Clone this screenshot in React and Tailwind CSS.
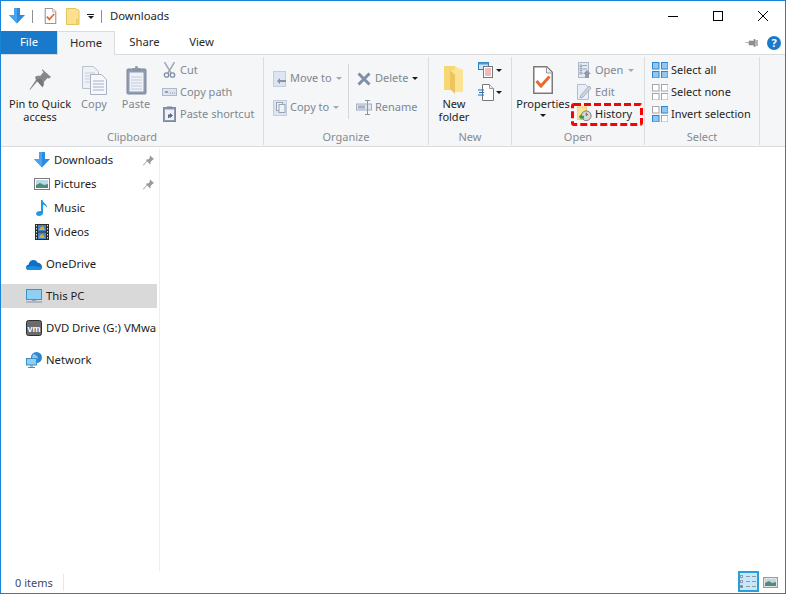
import { Fragment } from 'react'

const DownArrow = ({ size = 16 }) => (
  <svg width={size} height={size} viewBox="0 0 16 16" className="block">
    <path d="M5 0h6v7h5l-8 8.500L0 7h5z" fill="#2a8be0" />
    <path d="M5 0h3v15.500L0 7h5z" fill="#4ba3ec" />
  </svg>
)

const DocCheck = ({ w = 13, h = 16 }) => (
  <svg width={w} height={h} viewBox="0 0 20 28" className="block">
    <path d="M.75.750h13l5.500 5.500v21H.750z" fill="#fff" stroke="#7a7a7a" strokeWidth="1.500" />
    <path d="M13.500 1v6h5.500" fill="#eee" stroke="#9a9a9a" />
    <path d="M3.500 15l4.500 5 8.500-9.500" fill="none" stroke="#ea6a2e" strokeWidth="3" />
  </svg>
)

const MiniFolder = () => (
  <svg width="14" height="17" viewBox="0 0 14 17" className="block">
    <path d="M.5.500h9l3.500 2v14H.5z" fill="#fbe08e" stroke="#e4c45c" />
    <path d="M10 11h3v5h-3z" fill="#f0cf6c" />
  </svg>
)

const BigPin = () => (
  <svg width="22" height="22" viewBox="0 0 22 22" className="block">
    <path d="M13 0l9 8-2 1.500-1.500-.5-4 4.500c.7 2 .2 3.500-1 5L8 12l-1-1-1-3c1.500-1.200 3-1.700 5.200-1L14.500 3 13 1.500z" fill="#86898c" />
    <path d="M9 11.500L1 21l-.5-.5L7.500 10z" fill="#86898c" />
    <path d="M7 11l6.500 6.500c1-1.300 1.500-2.800.8-4.500L11 9.500z" fill="#75787b" />
  </svg>
)

const SmallPin = () => (
  <svg width="11" height="11" viewBox="0 0 22 22" className="block">
    <path d="M13 0l9 8-3 2-4 4c.7 2 .2 3.500-1 5L6 10c1.500-1.200 3-1.700 5.200-1L14 4z" fill="#9a9a9a" />
    <path d="M9 12L1 21l-1-1 8-9z" fill="#9a9a9a" />
  </svg>
)

const CopyBig = () => (
  <svg width="25" height="29" viewBox="0 0 25 29" className="block">
    <path d="M.5.500h11l5 5v17H.5z" fill="#eef1f6" stroke="#b9c1d0" />
    <path d="M3 7h10M3 10h10M3 13h10M3 16h10" stroke="#c9cfda" />
    <path d="M8.500 8.500h11l5 5v15h-16z" fill="#f6f8fb" stroke="#a9b3c4" />
    <path d="M11 15h11M11 18h11M11 21h11M11 24h11" stroke="#a5b0c5" />
  </svg>
)

const PasteBig = () => (
  <svg width="21" height="29" viewBox="0 0 21 29" className="block">
    <rect x="1" y="3" width="19" height="25" rx="1" fill="#8f9bb0" stroke="#7d899d" />
    <rect x="3.500" y="6.500" width="14" height="19" fill="#eef1f8" />
    <path d="M5 11h11M5 14h11M5 17h11M5 20h11M5 23h11" stroke="#c3cbdc" />
    <path d="M7 4.500V2.500h2.500V.500h2v2H14v2z" fill="#8f98a6" stroke="#7d8694" strokeWidth=".5" />
  </svg>
)

const Scissors = () => (
  <svg width="13" height="16" viewBox="0 0 13 16" className="block">
    <path d="M1.500 0l6.500 11M11.500 0L5 11" stroke="#a3a9b3" strokeWidth="1.500" fill="none" />
    <circle cx="3.500" cy="13" r="2.200" fill="none" stroke="#7d8fa8" strokeWidth="1.300" />
    <circle cx="9.500" cy="13" r="2.200" fill="none" stroke="#7d8fa8" strokeWidth="1.300" />
  </svg>
)

const CopyPathIcon = () => (
  <svg width="15" height="8" viewBox="0 0 15 8" className="block">
    <rect x=".5" y=".5" width="14" height="7" fill="#dfe6f2" stroke="#aeb9cc" />
    <path d="M3 3l1 2 1-2 1 2M8 5h1M10 5h1M12 5h1" stroke="#6f7b90" strokeWidth=".8" fill="none" />
  </svg>
)

const PasteShortcut = () => (
  <svg width="13" height="16" viewBox="0 0 13 16" className="block">
    <rect x=".5" y="1.500" width="12" height="14" fill="#8f9bb0" stroke="#7d899d" />
    <rect x="2" y="3.500" width="9" height="10.500" fill="#eef1f8" />
    <path d="M4 .5h5v2H4z" fill="#7d8694" />
    <path d="M5 12V8.500h2V7l3 2.500-3 2.500v-1.500H6.500V12z" fill="#5b6980" />
  </svg>
)

const MoveToIcon = () => (
  <svg width="13" height="16" viewBox="0 0 13 16" className="block">
    <rect x=".5" y=".5" width="12" height="15" fill="#dde5f3" stroke="#c2cde0" />
    <path d="M4 10l3-3v2h6v2H7v2z" fill="#8a94a6" />
  </svg>
)

const CopyToIcon = () => (
  <svg width="14" height="16" viewBox="0 0 14 16" className="block">
    <rect x=".5" y=".5" width="13" height="15" fill="#dde5f3" stroke="#c2cde0" />
    <rect x="3.500" y="2.500" width="6" height="8" fill="#eef2f8" stroke="#98a3b6" />
    <rect x="6" y="4.500" width="6" height="8" fill="#eef2f8" stroke="#98a3b6" />
  </svg>
)

const DeleteX = () => (
  <svg width="14" height="14" viewBox="0 0 14 14" className="block">
    <path d="M1.500 1.500l11 11M12.500 1.500l-11 11" stroke="#7f8fa8" strokeWidth="3" />
  </svg>
)

const RenameIcon = () => (
  <svg width="16" height="15" viewBox="0 0 16 15" className="block">
    <rect x=".5" y="4" width="15" height="6" fill="#dfe6f2" stroke="#a6b0c0" />
    <rect x="2" y="5.500" width="7" height="3" fill="#a6b0c0" />
    <path d="M9 .5h5M11.500 .5v14M9 14.500h5" stroke="#8a94a6" fill="none" />
  </svg>
)

const FolderBig = () => (
  <svg width="20" height="28" viewBox="0 0 20 28" className="block">
    <path d="M0 0h11v24H0z" fill="#f7d774" />
    <path d="M11 0l8 4v22l-8-2z" fill="#fbe7a2" />
    <path d="M6 4l13 0v22H11V9z" fill="#fbe394" />
    <path d="M6 4l5 5v19L6 23z" fill="#eec55a" />
  </svg>
)

const NewItemIcon = () => (
  <svg width="16" height="16" viewBox="0 0 16 16" className="block">
    <rect x=".5" y=".5" width="10" height="7" fill="#cfe6f8" stroke="#2d7fb8" />
    <path d="M.5.500h10v2H.5z" fill="#4a9ad4" />
    <rect x="5.500" y="4.500" width="9" height="11" fill="#fff" stroke="#777" />
    <path d="M7 7h6M7 9h6M7 11h6M7 13h6" stroke="#d9534f" strokeWidth=".8" />
  </svg>
)

const EasyAccessIcon = () => (
  <svg width="16" height="17" viewBox="0 0 16 17" className="block">
    <path d="M4.500.500h7l4 4v12h-11z" fill="#fff" stroke="#777" />
    <path d="M11.500.5v4h4" fill="#eee" stroke="#999" />
    <path d="M0 6h6M1 8.500h5M0 11h6" stroke="#1f6fb5" strokeWidth="1.200" />
  </svg>
)

const OpenIcon = () => (
  <svg width="13" height="16" viewBox="0 0 13 16" className="block">
    <rect x=".5" y=".5" width="10" height="15" fill="#e3e9f3" stroke="#aeb8c8" />
    <path d="M2 3h2v2H2zM2 6.500h2v2H2zM2 10h2v2H2zM5 3.500h4M5 7h4" stroke="#8c97aa" strokeWidth=".8" fill="none" />
    <path d="M9 8l4 4h-2v4H7v-4H5z" fill="#8f99ab" />
  </svg>
)

const EditIcon = () => (
  <svg width="15" height="16" viewBox="0 0 15 16" className="block">
    <path d="M.5.500h8l3 3v12H.5z" fill="#e9eef6" stroke="#b4bdcc" />
    <path d="M3 14l1-3 8-9 2 2-8 9z" fill="#cfd6e2" stroke="#9aa4b6" strokeWidth=".8" />
  </svg>
)

const HistoryIcon = () => (
  <svg width="17" height="16" viewBox="0 0 17 16" className="block">
    <rect x="0" y="0" width="11" height="14" fill="#fbe28e" stroke="#e2c256" strokeWidth=".8" />
    <circle cx="10.500" cy="10" r="5.500" fill="#d8d8d8" stroke="#6d6d6d" />
    <path d="M10.500 6.500V10l2-2" stroke="#555" fill="none" />
    <path d="M2 11l3-3v2h3v3H5v1.500z" fill="#3f9b37" />
  </svg>
)

const SelectGrid = ({ cells }) => (
  <svg width="16" height="16" viewBox="0 0 16 16" className="block">
    {[[0, 0], [9, 0], [0, 9], [9, 9]].map(([x, y], i) => (
      <rect
        key={i}
        x={x + 0.5}
        y={y + 0.5}
        width="6.500"
        height="6.500"
        fill={cells[i] ? '#8fc7f2' : '#fff'}
        stroke={cells[i] ? '#2e86cf' : '#a6a6a6'}
      />
    ))}
  </svg>
)

const PinBar = () => (
  <svg width="13" height="8" viewBox="0 0 13 8" className="block">
    <path d="M0 3.500h4M4 2h5V0h1v8H9V6H4z" fill="#8f8f8f" stroke="#8f8f8f" strokeWidth=".6" />
    <path d="M10 1h3v6h-3z" fill="#b5b5b5" />
  </svg>
)

const PicturesIcon = () => (
  <svg width="16" height="12" viewBox="0 0 16 12" className="block">
    <rect x=".5" y=".5" width="15" height="11" fill="#fff" stroke="#7a7a7a" />
    <rect x="2" y="2" width="12" height="8" fill="#bcd7e8" />
    <path d="M2 7l4-2 4 2 4-1v4H2z" fill="#4f8b76" />
  </svg>
)

const MusicIcon = () => (
  <svg width="12" height="16" viewBox="0 0 12 16" className="block">
    <path d="M5 0h1.500c.3 3 5 4 4.500 8-.8-2-2.500-3-4-3.300V13c0 2-2 3-4 3s-3-1-3-2.200C0 12 2 10.800 5 11z" fill="#1f9be6" />
  </svg>
)

const VideosIcon = () => (
  <svg width="14" height="16" viewBox="0 0 14 16" className="block">
    <rect width="14" height="16" fill="#2b2b2b" />
    <rect x="3" y="1" width="8" height="6.500" fill="#3f87c9" />
    <rect x="3" y="8.500" width="8" height="6.500" fill="#3f87c9" />
    <path d="M5 4l3-2 2 4H4zM5 11l3-1 2 4H4z" fill="#d9a93c" />
    {[1, 4, 7, 10, 13].map((y) => (
      <Fragment key={y}>
        <rect x="1" y={y} width="1" height="1.500" fill="#ddd" />
        <rect x="12" y={y} width="1" height="1.500" fill="#ddd" />
      </Fragment>
    ))}
  </svg>
)

const CloudIcon = () => (
  <svg width="16" height="11" viewBox="0 0 16 11" className="block">
    <path d="M3 11C1 11 0 9.700 0 8.300 0 6.800 1.200 5.800 2.500 5.800 3 3 5 1 7.500 1c2 0 3.500 1.100 4.200 2.800C14 3.800 16 5.500 16 8c0 1.700-1 3-3 3z" fill="#0f6fc6" />
    <path d="M3 11C1 11 0 9.700 0 8.300c3 0 4-1.500 7-1.500 3 0 5 1.700 9 1.200 0 1.700-1 3-3 3z" fill="#1c8ee0" />
  </svg>
)

const MonitorIcon = () => (
  <svg width="16" height="14" viewBox="0 0 16 14" className="block">
    <rect x=".5" y=".5" width="15" height="10" fill="#8ed0f5" stroke="#3b93c9" />
    <rect x="6" y="11" width="4" height="1" fill="#9aa7b5" />
    <rect x="0" y="12.500" width="16" height="1" fill="#7f93a8" />
  </svg>
)

const VmIcon = () => (
  <svg width="16" height="16" viewBox="0 0 16 16" className="block">
    <rect x=".5" y=".5" width="15" height="15" rx="2" fill="#6b6b6b" stroke="#2f2f2f" />
    <text x="8" y="11.500" textAnchor="middle" fontSize="9" fontFamily="Liberation Sans, sans-serif" fontWeight="700" fill="#fff">vm</text>
  </svg>
)

const NetworkIcon = () => (
  <svg width="16" height="16" viewBox="0 0 16 16" className="block">
    <circle cx="10.500" cy="5.500" r="5.500" fill="#2d86cf" />
    <path d="M7 2c2 0 4 1 5 4l-3 3-3-3z" fill="#8ac6ee" />
    <rect x=".5" y="6.500" width="10" height="6.500" fill="#8ed0f5" stroke="#3b8cbf" />
    <rect x="4" y="13.500" width="3" height="1" fill="#5b86a6" />
    <rect x="2" y="15" width="7" height="1" fill="#5b86a6" />
  </svg>
)

const DetailsViewIcon = () => (
  <svg width="17" height="13" viewBox="0 0 17 13" className="block">
    {[0, 5, 10].map((y, i) => (
      <Fragment key={y}>
        <rect x=".5" y={y + 0.5} width="2" height="2" fill={i === 2 ? '#c0504d' : '#fff'} stroke="#8b9aa8" />
        <path d={`M6 ${y + 1.5}h4M12 ${y + 1.500}h4`} stroke="#8b9aa8" />
      </Fragment>
    ))}
  </svg>
)

const Caret = ({ muted }) => (
  <span className={`inline-block w-0 h-0 border-x-[3px] border-x-transparent border-t-[3px] ${muted ? 'border-t-[#a8a8a8]' : 'border-t-[#1a1a1a]'}`} />
)

// --- ribbon pieces

function BigButton({ icon, lines, disabled, caret, width }) {
  return (
    <div className={`flex flex-col items-center shrink-0 ${width} ${disabled ? 'text-[#7f8792]' : 'text-[#1e1e1e]'}`}>
      <div className="h-[38px] flex items-center justify-center pt-[4px]">{icon}</div>
      {lines.map((l) => (
        <span key={l} className="h-[13px] leading-[13px] whitespace-nowrap">{l}</span>
      ))}
      {caret && <span className="flex h-[11px] items-center"><Caret /></span>}
    </div>
  )
}

function SmallRow({ icon, label, disabled, iconWidth = 'w-[16px]', height = 'h-[22px]', caret }) {
  return (
    <div className={`flex items-center whitespace-nowrap gap-[3px] ${height} ${disabled ? 'text-[#7f8792]' : 'text-[#1e1e1e]'}`}>
      <span className={`flex justify-center shrink-0 ${iconWidth}`}>{icon}</span>
      <span>{label}</span>
      {caret}
    </div>
  )
}

function Group({ label, width, children }) {
  return (
    <div className={`flex flex-col h-[88px] shrink-0 border-r border-[#dcdddf] ${width}`}>
      <div className="flex flex-1 pt-[2px]">{children}</div>
      <div className="h-[14px] mb-px leading-[14px] text-center text-[#858b92]">{label}</div>
    </div>
  )
}

const NAV = [
  { icon: <DownArrow />, label: 'Downloads', indent: 'pl-[33px]', pinned: true },
  { icon: <PicturesIcon />, label: 'Pictures', indent: 'pl-[33px]', pinned: true },
  { icon: <MusicIcon />, label: 'Music', indent: 'pl-[33px]' },
  { icon: <VideosIcon />, label: 'Videos', indent: 'pl-[33px]', gapAfter: true },
  { icon: <CloudIcon />, label: 'OneDrive', indent: 'pl-[25px]', gapAfter: true },
  { icon: <MonitorIcon />, label: 'This PC', indent: 'pl-[25px]', active: true, gapAfter: true },
  { icon: <VmIcon />, label: 'DVD Drive (G:) VMware Tools', indent: 'pl-[25px]', gapAfter: true },
  { icon: <NetworkIcon />, label: 'Network', indent: 'pl-[25px]' },
]

export default function App() {
  return (
    <div
      className="w-[786px] h-[594px] flex flex-col border border-[#1883d7] bg-white text-[11.300px] text-[#1e1e1e] overflow-hidden"
      style={{ fontFamily: '"Noto Sans", sans-serif' }}
    >
      {/* Title bar */}
      <div className="flex items-center h-[30px] shrink-0">
        <div className="flex items-center pl-[8px]">
          <DownArrow />
          <span className="w-px h-[13px] bg-[#8f8f8f] ml-[7px]" />
          <span className="ml-[11px]"><DocCheck /></span>
          <span className="ml-[9px]"><MiniFolder /></span>
          <span className="ml-[7px] flex flex-col items-center gap-[1px]">
            <span className="w-[7px] h-px bg-[#1a1a1a]" />
            <Caret />
          </span>
          <span className="w-px h-[13px] bg-[#8f8f8f] ml-[7px]" />
          <span className="ml-[8px]">Downloads</span>
        </div>
        <div className="ml-auto flex">
          <div className="w-[45px] h-[30px] flex items-center justify-center">
            <span className="w-[10px] h-px bg-black" />
          </div>
          <div className="w-[45px] h-[30px] flex items-center justify-center">
            <span className="w-[10px] h-[10px] border border-black" />
          </div>
          <div className="w-[45px] h-[30px] flex items-center justify-center">
            <svg width="10" height="10" viewBox="0 0 10 10" className="block">
              <path d="M0 0l10 10M10 0L0 10" stroke="#000" strokeWidth="1" />
            </svg>
          </div>
        </div>
      </div>

      {/* Tabs */}
      <div className="flex h-[23px] shrink-0 text-[#2a2a2a]">
        <div className="w-[56px] flex items-center justify-center bg-[#1979ca] text-white">File</div>
        <div className="relative z-10 w-[58px] h-[24px] flex items-center justify-center bg-[#f5f6f7] border border-b-0 border-[#dadbdc]">Home</div>
        <div className="w-[59px] flex items-center justify-center">Share</div>
        <div className="w-[55px] flex items-center justify-center">View</div>
        <div className="ml-auto flex items-center gap-[9px] pr-[4px]">
          <PinBar />
          <span className="w-[14px] h-[14px] rounded-full bg-[#1979ca] text-white text-[11px] font-bold leading-[14px] text-center">?</span>
        </div>
      </div>

      {/* Ribbon */}
      <div className="flex h-[93px] shrink-0 pt-[2px] bg-[#f5f6f7] border-t border-b border-[#dadbdc] text-[11px]">
        <Group label="Clipboard" width="w-[263px]">
          <div className="flex pl-[4px]">
            <BigButton width="w-[70px]" icon={<BigPin />} lines={['Pin to Quick', 'access']} />
            <BigButton width="w-[38px]" icon={<CopyBig />} lines={['Copy']} disabled />
            <BigButton width="w-[46px]" icon={<PasteBig />} lines={['Paste']} disabled />
            <div className="flex flex-col pl-[2px]">
              <SmallRow icon={<Scissors />} label="Cut" disabled />
              <SmallRow icon={<CopyPathIcon />} label="Copy path" disabled />
              <SmallRow icon={<PasteShortcut />} label="Paste shortcut" disabled />
            </div>
          </div>
        </Group>
        <Group label="Organize" width="w-[165px]">
          <div className="flex pl-[8px] pt-[5px]">
            <div className="flex flex-col w-[76px]">
              <SmallRow height="h-[29px]" iconWidth="w-[15px]" icon={<MoveToIcon />} label="Move to" disabled caret={<span className="ml-[1px] flex"><Caret muted /></span>} />
              <SmallRow height="h-[29px]" iconWidth="w-[15px]" icon={<CopyToIcon />} label="Copy to" disabled caret={<span className="ml-[1px] flex"><Caret muted /></span>} />
            </div>
            <div className="w-px h-[55px] bg-[#d5d6d8]" />
            <div className="flex flex-col pl-[7px]">
              <SmallRow height="h-[29px]" iconWidth="w-[16px]" icon={<DeleteX />} label="Delete" disabled caret={<span className="ml-[1px] flex"><Caret /></span>} />
              <SmallRow height="h-[29px]" iconWidth="w-[16px]" icon={<RenameIcon />} label="Rename" disabled />
            </div>
          </div>
        </Group>
        <Group label="New" width="w-[83px]">
          <div className="flex pl-[6px]">
            <BigButton width="w-[38px]" icon={<FolderBig />} lines={['New', 'folder']} />
            <div className="flex flex-col pl-[5px] pt-[3px] gap-[6px]">
              <div className="flex items-center gap-[2px]"><NewItemIcon /><Caret /></div>
              <div className="flex items-center gap-[2px]"><EasyAccessIcon /><Caret /></div>
            </div>
          </div>
        </Group>
        <Group label="Open" width="w-[133px]">
          <div className="flex pl-[4px]">
            <BigButton width="w-[54px]" icon={<DocCheck w={20} h={28} />} lines={['Properties']} caret />
            <div className="flex flex-col pl-[7px]">
              <SmallRow iconWidth="w-[15px]" icon={<OpenIcon />} label="Open" disabled caret={<span className="ml-[2px] flex"><Caret muted /></span>} />
              <SmallRow iconWidth="w-[15px]" icon={<EditIcon />} label="Edit" disabled />
              <div className="relative">
                <SmallRow iconWidth="w-[15px]" icon={<HistoryIcon />} label="History" />
                <svg width="72" height="23" viewBox="0 0 72 23" className="absolute left-[-6px] top-0 block">
                  <rect x="1.500" y="1.500" width="69" height="20" rx="1.500" fill="none" stroke="#ff0000" strokeWidth="3" strokeDasharray="7 3" />
                </svg>
              </div>
            </div>
          </div>
        </Group>
        <Group label="Select" width="w-[115px]">
          <div className="flex flex-col pl-[7px]">
            <SmallRow icon={<SelectGrid cells={[1, 1, 1, 1]} />} label="Select all" />
            <SmallRow icon={<SelectGrid cells={[0, 0, 0, 0]} />} label="Select none" />
            <SmallRow icon={<SelectGrid cells={[0, 1, 1, 0]} />} label="Invert selection" />
          </div>
        </Group>
      </div>

      {/* Body */}
      <div className="flex flex-1 min-h-0 pt-[1px]">
        <div className="w-[159px] shrink-0 pr-[2px] border-r border-[#eeeeee]">
          {NAV.map((n) => (
            <div
              key={n.label}
              className={`flex items-center h-[24px] overflow-hidden whitespace-nowrap ${n.indent} ${n.active ? 'bg-[#d9d9d9]' : ''} ${n.gapAfter ? 'mb-[8px]' : ''}`}
            >
              <span className="flex justify-center shrink-0 w-[16px]">{n.icon}</span>
              <span className="ml-[4px]">{n.label}</span>
              {n.pinned && <span className="ml-auto mr-[3px]"><SmallPin /></span>}
            </div>
          ))}
        </div>
        <div className="flex-1" />
      </div>

      {/* Status bar */}
      <div className="flex items-center h-[22px] shrink-0 text-[11px] text-[#3a4a68]">
        <div className="pl-[14px] w-[63px] border-r border-[#e8e8e8] h-[17px] leading-[17px]">0 items</div>
        <div className="ml-auto flex items-center pr-[7px] gap-[4px]">
          <div className="w-[21px] h-[21px] -mt-px flex items-center justify-center bg-[#c9e7fa] border-2 border-[#26a0da]">
            <DetailsViewIcon />
          </div>
          <svg width="15" height="11" viewBox="0 0 15 11" className="block">
            <rect x=".5" y=".5" width="14" height="10" fill="#fff" stroke="#9a9a9a" strokeWidth="1.500" />
            <rect x="2" y="2" width="11" height="7" fill="#bcd7e8" />
            <path d="M2 6l4-2 3 2 4-1v4H2z" fill="#4f8b76" />
          </svg>
        </div>
      </div>
    </div>
  )
}
